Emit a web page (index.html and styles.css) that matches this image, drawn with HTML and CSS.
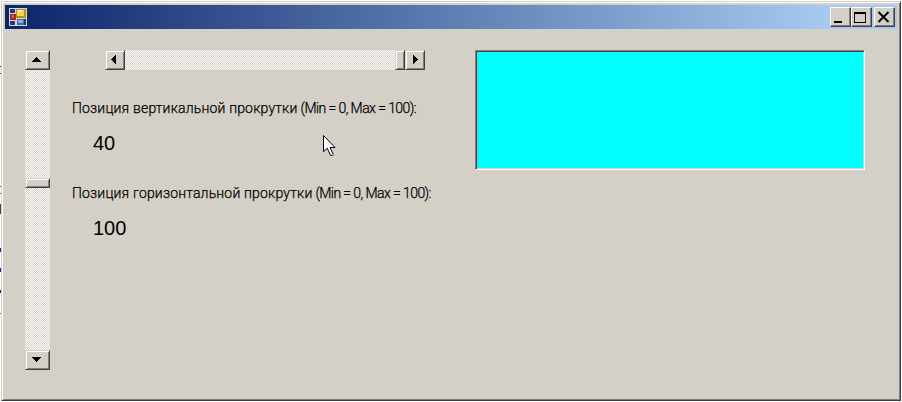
FILE: index.html
```html
<!DOCTYPE html>
<html lang="ru">
<head>
<meta charset="utf-8">
<title>Form</title>
<link rel="stylesheet" href="styles.css">
</head>
<body>
<div class="desktop">
<svg class="edge" width="2" height="402" shape-rendering="crispEdges"><path fill="#223064" d="M0 66h1v1h-1zM0 73h1v1h-1z"/><path fill="#287868" d="M0 186h1v1h-1zM0 193h1v1h-1z"/><path fill="#6b3444" d="M0 204h1v10h-1z"/><path fill="#1c1c9c" d="M0 248h1v4h-1zM0 268h1v4h-1zM0 290h1v3h-1z"/><path fill="#777" d="M0 313h1v1h-1z"/></svg>
<div class="window">
  <header class="titlebar">
    <svg class="app-icon" width="18" height="18" shape-rendering="crispEdges">
      <path fill="#d7d5ce" d="M0 0h18v18H0z"/><path fill="#26396f" d="M1 1h5v4H1zM1 13h5v4H1zM15 11h2v6h-2z"/>
      <path fill="#9e2d24" d="M1 6h6v6H1z"/><path fill="#e25c43" d="M3 7h2v3H3z"/>
      <path fill="#b6912a" d="M7 1h10v9H7z"/><path fill="#f4d253" d="M8 2h7v6H8z"/><path fill="#fff0a0" d="M9 2h4v2H9z"/>
      <path fill="#3e69b5" d="M8 11h7v6H8z"/><path fill="#82b4f2" d="M9 12h5v3H9z"/>
    </svg>
    <div class="controls">
      <button class="btn caption"><svg width="21" height="20" shape-rendering="crispEdges"><path d="M4 14h8v2H4z"/></svg></button>
      <button class="btn caption"><svg width="21" height="20" shape-rendering="crispEdges"><path fill-rule="evenodd" d="M3 5h12v11H3zM4 7v8h10V7z"/></svg></button>
      <button class="btn caption close"><svg width="21" height="20"><path fill="none" stroke="#000" stroke-width="2" d="M4.5 5l10 10M14.5 5l-10 10"/></svg></button>
    </div>
  </header>
  <main class="form">
    <div class="scroll vertical">
      <button class="btn arrow"><svg width="9" height="5" shape-rendering="crispEdges"><path d="M4 0h1v1h1v1h1v1h1v1h1v1H0V4h1V3h1V2h1V1h1z"/></svg></button>
      <div class="track before"></div>
      <div class="btn thumb"></div>
      <div class="track"></div>
      <button class="btn arrow"><svg width="9" height="5" shape-rendering="crispEdges"><path d="M0 0h9v1H8v1H7v1H6v1H5v1H4V4H3V3H2V2H1V1H0z"/></svg></button>
    </div>
    <section class="info">
      <div class="scroll horizontal">
        <button class="btn arrow"><svg width="5" height="9" shape-rendering="crispEdges"><path d="M5 0v9H4V8H3V7H2V6H1V5H0V4h1V3h1V2h1V1h1V0z"/></svg></button>
        <div class="track"></div>
        <div class="btn thumb"></div>
        <button class="btn arrow next"><svg width="5" height="9" shape-rendering="crispEdges"><path d="M0 0h1v1h1v1h1v1h1v1h1v1H4v1H3v1H2v1H1v1H0z"/></svg></button>
      </div>
      <div class="label"><span>Позиция вертикальной прокрутки</span><span class="range">(Min = 0, Max = 100):</span></div>
      <div class="value">40</div>
      <div class="label"><span>Позиция горизонтальной прокрутки</span><span class="range">(Min = 0, Max = 100):</span></div>
      <div class="value">100</div>
    </section>
    <div class="swatch"></div>
  </main>
</div>
<svg class="cursor" width="13" height="22" viewBox="0 0 13 22"><path fill="#fff" stroke="#000" d="M.5.5v16.2l3.7-3.5 3.3 7.1q2 1 2.7-1L7 12.5h5z"/></svg>
</div>
</body>
</html>
```
FILE: styles.css
```css
* { box-sizing: border-box; }
body { margin: 0; background: #fff; font-family: "Liberation Sans", Arial, sans-serif; color: #000; }
.desktop { position: relative; width: 902px; height: 402px; padding: 1px; overflow: hidden; }
.edge { position: absolute; left: 0; top: 0; }
.window {
  position: relative; width: 900px; height: 400px; padding: 2px; background: #d4d0c8;
  border: 1px solid; border-color: #d4d0c8 #404040 #404040 #d4d0c8;
  box-shadow: inset 1px 1px #fff, inset -1px -1px #808080;
}
.titlebar {
  display: flex; align-items: center; justify-content: space-between;
  height: 24px; margin: 1px; padding: 0 2px 0 4px;
  background: linear-gradient(90deg, #0a246a, #a6caf0 825px);
}
.controls { display: flex; }
.btn {
  display: flex; align-items: center; justify-content: center; flex: none;
  margin: 0; padding: 0; background: #d4d0c8; border: 1px solid;
  border-color: #d4d0c8 #404040 #404040 #d4d0c8; border-radius: 0;
  box-shadow: inset 1px 1px #fff, inset -1px -1px #808080;
}
.caption { width: 21px; height: 20px; border-color: #fff #404040 #404040 #fff; box-shadow: inset -1px -1px #808080; }
.caption svg { flex: none; }
.close { margin-left: 2px; }
.form { display: flex; align-items: flex-start; padding: 20px 0 0 21px; }
.scroll { display: flex; }
.vertical { flex-direction: column; width: 25px; height: 320px; }
.vertical .arrow { width: 25px; height: 20px; padding: 0 2px 1px 0; }
.vertical .thumb { height: 10px; }
.vertical .before { flex: none; height: 108px; }
.track { flex: 1; background: conic-gradient(#fff 25%, #d4d0c8 0 50%, #fff 0 75%, #d4d0c8 0) 0 0 / 2px 2px; }
.info { width: 425px; padding-left: 22px; }
.horizontal { width: 320px; height: 20px; margin-left: 33px; }
.horizontal .arrow { width: 20px; height: 20px; padding: 0 3px 1px 0; }
.horizontal .next { padding-right: 0; padding-left: 1px; }
.horizontal .thumb { width: 10px; }
.label {
  display: flex; gap: 3px; height: 20px; margin-top: 28px; white-space: nowrap;
  font: 300 14px/20px Roboto, "Liberation Sans", sans-serif; letter-spacing: 0.17px;
  -webkit-text-stroke: 0.25px #000;
}
.range { letter-spacing: -0.58px; }
.value { height: 25px; margin: 12px 0 0 21px; padding-top: 1px; font-size: 20px; line-height: 25px; }
.swatch {
  width: 390px; height: 120px; background: #0ff; border: 1px solid;
  border-color: #808080 #fff #fff #808080;
  box-shadow: inset 1px 1px #404040, inset -1px -1px #d4d0c8;
}
.cursor { position: absolute; left: 323px; top: 135px; }
```
